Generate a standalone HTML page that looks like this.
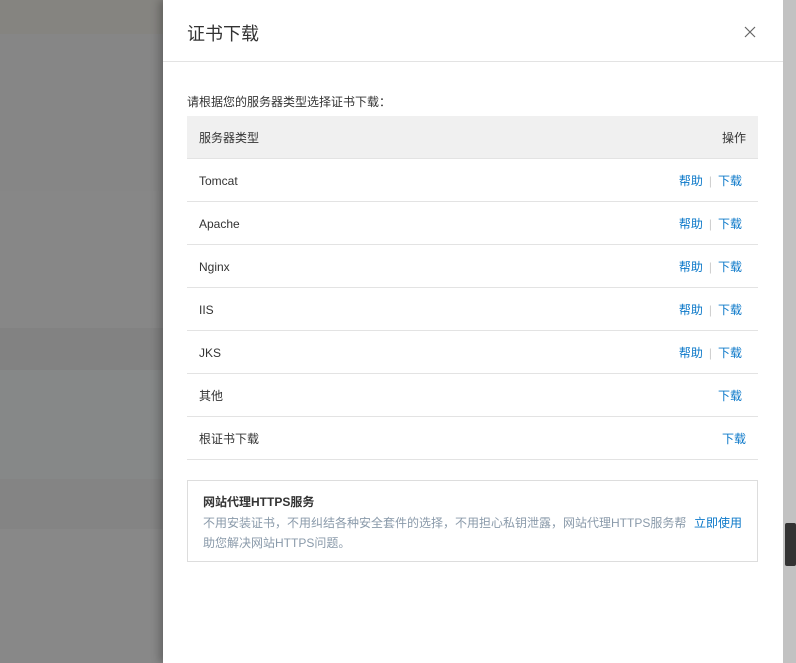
<!DOCTYPE html>
<html><head><meta charset="utf-8"><style>
*{margin:0;padding:0;box-sizing:border-box}
body{width:796px;height:663px;overflow:hidden;position:relative;background:#888;font-family:"Liberation Sans","Noto Sans CJK SC",sans-serif;font-size:12px;color:#333}
.bg{position:absolute;left:0;width:163px}
.drawer{position:absolute;left:163px;top:0;width:620px;height:663px;background:#fff;box-shadow:-4px 0 8px rgba(0,0,0,.25)}
.sb{position:absolute;left:783px;top:0;width:13px;height:663px;background:#c2c2c2}
.hd{height:62px;border-bottom:1px solid #e3e3e3;position:relative}
.hd h1{position:absolute;left:24px;top:22px;font-size:18px;font-weight:normal;color:#333;line-height:24px}
.x{position:absolute;left:580px;top:25px;width:14px;height:14px}
.intro{position:absolute;left:24px;top:94px;line-height:16px}
table{position:absolute;left:24px;top:116px;width:571px;border-collapse:collapse}
td,th{height:43px;border-bottom:1px solid #e3e3e3;padding:2px 12px 0;font-weight:normal;text-align:left;vertical-align:middle}
th{background:#f0f0f0;height:42px}
.r{text-align:right;color:#0b78c9;padding-right:16px}
.r span{color:#ccc;margin:0 6px}
.box{position:absolute;left:24px;top:480px;width:571px;height:82px;border:1px solid #ddd;padding:13px 15px}
.box b{display:block;font-size:12px;color:#333;line-height:16px}
.box p{color:#8a9aaa;line-height:20px;width:490px;margin-top:3px}
.box a{position:absolute;right:15px;top:33px;color:#0b78c9}
</style></head><body>
<div class="bg" style="top:0;height:34px;background:#858480"></div>
<div class="bg" style="top:34px;height:157px;background:#868686"></div>
<div class="bg" style="top:191px;height:137px;background:#878787"></div>
<div class="bg" style="top:328px;height:42px;background:#828282"></div>
<div class="bg" style="top:370px;height:109px;background:#868888"></div>
<div class="bg" style="top:479px;height:50px;background:#848484"></div>
<div class="drawer">
<div class="hd"><h1>证书下载</h1>
<svg class="x" viewBox="0 0 14 14"><path d="M2 2L12 12M12 2L2 12" stroke="#666" stroke-width="1.2"/></svg></div>
<div class="intro">请根据您的服务器类型选择证书下载：</div>
<table>
<tr><th>服务器类型</th><th style="text-align:right">操作</th></tr>
<tr><td>Tomcat</td><td class="r">帮助<span>|</span>下载</td></tr>
<tr><td>Apache</td><td class="r">帮助<span>|</span>下载</td></tr>
<tr><td>Nginx</td><td class="r">帮助<span>|</span>下载</td></tr>
<tr><td>IIS</td><td class="r">帮助<span>|</span>下载</td></tr>
<tr><td>JKS</td><td class="r">帮助<span>|</span>下载</td></tr>
<tr><td>其他</td><td class="r">下载</td></tr>
<tr><td>根证书下载</td><td class="r" style="padding-right:12px">下载</td></tr>
</table>
<div class="box"><b>网站代理HTTPS服务</b><p>不用安装证书，不用纠结各种安全套件的选择，不用担心私钥泄露，网站代理HTTPS服务帮助您解决网站HTTPS问题。</p><a>立即使用</a></div>
</div>
<div class="sb"><div style="position:absolute;left:2px;top:523px;width:11px;height:43px;background:#333;border-radius:2px"></div></div>
</body></html>
